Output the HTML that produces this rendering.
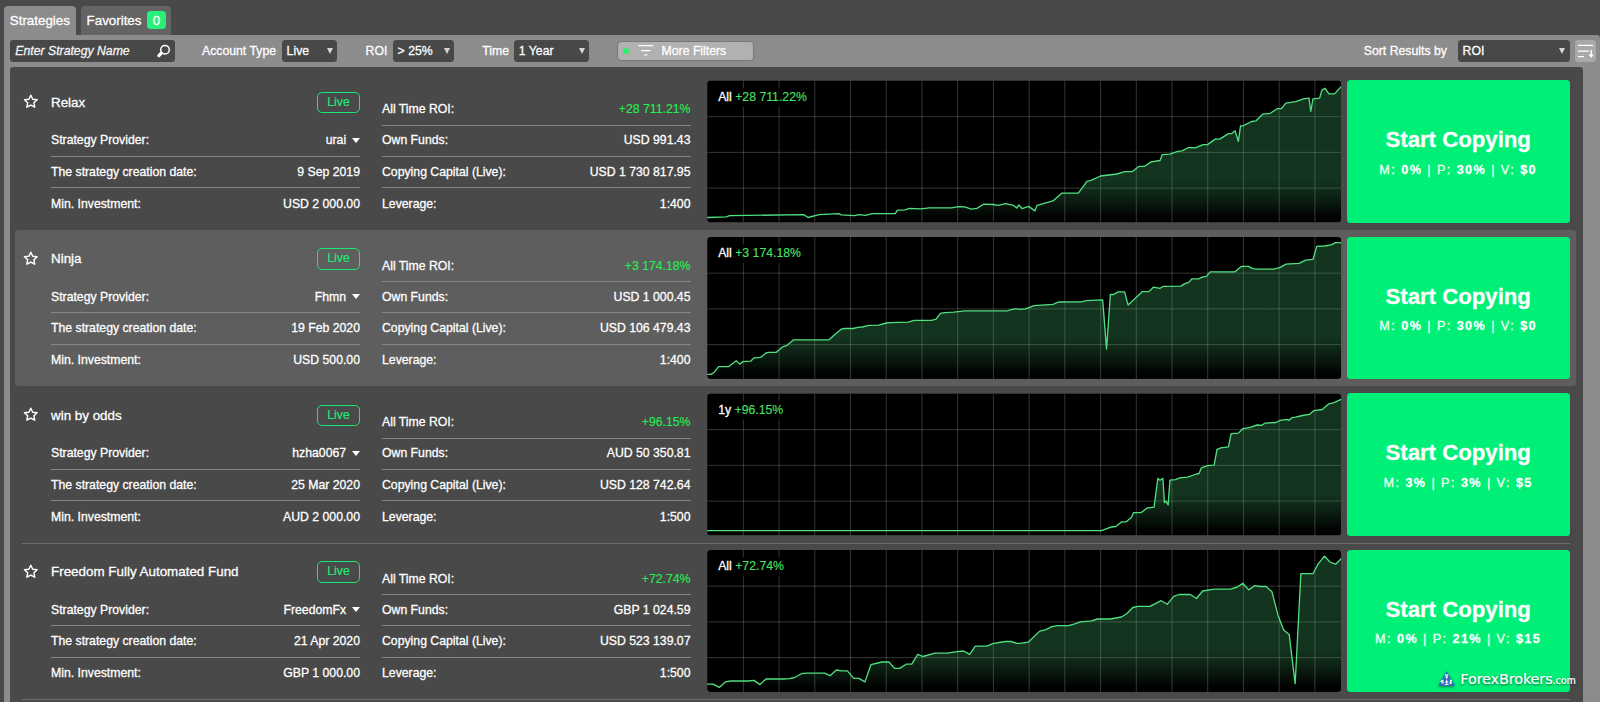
<!DOCTYPE html>
<html lang="en"><head><meta charset="utf-8"><title>Strategies</title>
<style>
*{box-sizing:border-box;margin:0;padding:0}
html,body{width:1600px;height:702px;overflow:hidden;background:#494949;font-family:"Liberation Sans",Arial,sans-serif;color:#fff;-webkit-text-stroke:0.28px currentColor}
body{position:relative}
.panel{position:absolute;left:4px;top:35px;width:1596px;height:667px;background:#8c8c8c;border-radius:0 3px 0 0}
.tab{position:absolute;top:5.5px;height:29.5px;border-radius:4px 4px 0 0;font-size:13.35px;line-height:30px;white-space:nowrap}
.tab.ta{left:4px;width:71.5px;background:#8c8c8c;padding-left:5.8px}
.tab.tb2{left:81px;width:90px;background:#646464;padding-left:5.6px}
.badge{position:absolute;left:66px;top:5.2px;width:19px;height:18.2px;border-radius:3.5px;background:#27f07a;color:#fff;font-size:13.35px;line-height:19.6px;text-align:center}
.tb{position:absolute;top:40px;height:21.6px;font-size:12.25px;line-height:23px;white-space:nowrap}
.lbl{position:absolute;top:40.5px;height:21px;font-size:12.25px;line-height:21px;white-space:nowrap;color:#fff}
.sel{background:#484848;border-radius:3.5px;padding-left:4.6px;color:#fff}
.sel i{position:absolute;right:4.3px;top:7.7px;width:0;height:0;border-left:3.2px solid transparent;border-right:3.2px solid transparent;border-top:6.3px solid #d6d6d6}
.search{left:10px;width:164.5px;background:#484848;border-radius:3px;padding-left:5.3px;font-style:italic;color:#f4f4f4}
.list{position:absolute;left:10px;top:67px;width:1573px;height:635px;background:#494949;border-radius:3px 3px 0 0;overflow:hidden}
.row{position:absolute;left:0;width:1573px;height:156.5px}
.row::after{content:"";position:absolute;left:12px;right:13px;bottom:-0.25px;height:1px;background:#6e6e6e}
.row.hl::after{display:none}
.rowbg{display:none}
.row.hl .rowbg{display:block;position:absolute;left:5px;top:-0.1px;width:1561px;height:156px;background:#5e5e5e;border-radius:3px}
.star{position:absolute;left:13.4px;top:20.5px}
.name{position:absolute;left:41px;top:19px;font-size:13.4px;line-height:20px;white-space:nowrap}
.live{position:absolute;left:307px;top:18px;width:43px;height:21.5px;border:1.4px solid #16e874;border-radius:5px;color:#1ceb78;-webkit-text-stroke:0.15px currentColor;font-size:12.25px;line-height:19.2px;text-align:center}
.col{position:absolute;top:0;font-size:12.25px}
.c1{left:41px;width:309px}
.c2{left:372px;width:308.5px}
.kv{position:absolute;left:0;right:0;height:31.2px;line-height:31.2px;white-space:nowrap}
.kv::before{content:"";position:absolute;left:0;right:0;top:0;height:1px;background:#868686}
.kv .v{position:absolute;right:0;top:0}
.kv .v.g{color:#24ee50;-webkit-text-stroke:0.12px currentColor}
.kv.r1{top:20.7px}
.kv.r1::before,.c1 .kv.r2::before{display:none}
.kv.r2{top:51.7px}
.kv.r2::before{top:-0.65px}
.kv.r3{top:83px}
.kv.r3::before{top:-0.95px}
.kv.r4{top:114.85px}
.kv.r4::before{top:-1.6px}
.prov{padding-right:13.9px}
.tri{position:absolute;right:-0.2px;top:12.5px;width:0;height:0;border-left:4.9px solid transparent;border-right:4.9px solid transparent;border-top:5.6px solid #fff}
.chart{position:absolute;left:697px;top:6.55px;width:636px;height:144px}
.chart-svg{position:absolute;left:0;top:0;display:block}
.clabel{position:absolute;left:7.2px;top:7.6px;padding:1px 4px 2px 4px;background:rgba(0,0,0,.82);font-size:12.25px;line-height:16px;color:#fff;white-space:nowrap}
.clabel span{color:#48e368;-webkit-text-stroke:0.12px currentColor}
.copy{position:absolute;left:1336.7px;top:6.5px;width:223px;height:142.6px;background:#00f077;border-radius:3.5px;text-align:center;color:#fff}
.t1{position:absolute;left:0;right:0;top:46px;font-size:22.2px;font-weight:bold;line-height:28px;white-space:nowrap}
.t2{position:absolute;left:0;right:0;top:80.5px;font-size:12.6px;line-height:18px;letter-spacing:1.45px;white-space:nowrap;color:#f2fff8}
.t2 b{color:#fff}

</style></head>
<body>
<div class="panel"></div>
<div class="tab ta">Strategies</div>
<div class="tab tb2">Favorites<div class="badge">0</div></div>
<div class="tb search">Enter Strategy Name<svg style="position:absolute;left:145px;top:0" width="16" height="21" viewBox="0 0 16 21"><circle cx="10" cy="9.75" r="4.3" fill="none" stroke="#fff" stroke-width="1.5"/><path d="M6.3 13.2 L3.9 15.6" stroke="#fff" stroke-width="3.3" stroke-linecap="round"/></svg></div>
<div class="lbl" style="left:202px">Account Type</div>
<div class="tb sel" style="left:282px;width:55.2px">Live<i></i></div>
<div class="lbl" style="left:365.6px">ROI</div>
<div class="tb sel" style="left:393px;width:61px">&gt; 25%<i></i></div>
<div class="lbl" style="left:482.3px">Time</div>
<div class="tb sel" style="left:514.2px;width:74.8px">1 Year<i></i></div>
<div class="tb more" style="left:617.4px;top:41.4px;width:137px;height:20px;background:#b1b1b1;border:1px solid #777;border-radius:4px;line-height:18px">
<span style="position:absolute;left:4.4px;top:5.4px;width:6.2px;height:6.2px;border-radius:50%;background:#2df06c"></span>
<svg style="position:absolute;left:18.4px;top:1px" width="18" height="15" viewBox="0 0 18 15"><path d="M1.3 2.6 H16.3 M4.3 7.6 H13.3 M7 12 H10.6" stroke="#fff" stroke-width="1.2" fill="none"/></svg>
<span style="position:absolute;left:43.2px;top:0">More Filters</span></div>
<div class="lbl" style="left:1363.8px">Sort Results by</div>
<div class="tb sel" style="left:1458px;width:111.6px">ROI<i></i></div>
<div class="tb" style="left:1575px;width:21px;background:#a9a9a9;border-radius:3px">
<svg style="position:absolute;left:0;top:0" width="21" height="21" viewBox="0 0 21 21"><path d="M2.9 5.3 H18.2 M2.9 11.05 H13.6 M2.9 16.7 H9" stroke="#fff" stroke-width="1.3" fill="none"/><path d="M16.2 10 V15.4" stroke="#fff" stroke-width="1.4" fill="none"/><path d="M13.5 14.6 H18.9 L16.2 18 Z" fill="#fff"/></svg></div>

<div class="list">
<div class="row" style="top:6.75px">
<div class="rowbg"></div>
<svg class="star" width="15.6" height="14.56" viewBox="0 0 15 14"><path d="M7.5 1.2 L9.35 5.05 L13.6 5.6 L10.5 8.5 L11.3 12.7 L7.5 10.65 L3.7 12.7 L4.5 8.5 L1.4 5.6 L5.65 5.05 Z" fill="none" stroke="#fff" stroke-width="1.4" stroke-linejoin="round"/></svg>
<div class="name">Relax</div>
<div class="live">Live</div>
<div class="col c1">
<div class="kv r2"><span class="k">Strategy Provider:</span><span class="v prov">urai<i class="tri"></i></span></div>
<div class="kv r3"><span class="k">The strategy creation date:</span><span class="v">9 Sep 2019</span></div>
<div class="kv r4"><span class="k">Min. Investment:</span><span class="v">USD 2 000.00</span></div>
</div>
<div class="col c2">
<div class="kv r1"><span class="k">All Time ROI:</span><span class="v g">+28 711.21%</span></div>
<div class="kv r2"><span class="k">Own Funds:</span><span class="v">USD 991.43</span></div>
<div class="kv r3"><span class="k">Copying Capital (Live):</span><span class="v">USD 1 730 817.95</span></div>
<div class="kv r4"><span class="k">Leverage:</span><span class="v">1:400</span></div>
</div>
<div class="chart" style="top:6.25px"><svg class="chart-svg" width="636" height="144" viewBox="0 0 636 144">
<defs><linearGradient id="fg0" x1="0" y1="0" x2="0" y2="142" gradientUnits="userSpaceOnUse"><stop offset="0" stop-color="#40ac66" stop-opacity="0.3"/><stop offset="0.705" stop-color="#40ac66" stop-opacity="0.3"/><stop offset="0.80" stop-color="#40ac66" stop-opacity="0.215"/><stop offset="0.90" stop-color="#40ac66" stop-opacity="0.1"/><stop offset="0.955" stop-color="#40ac66" stop-opacity="0.02"/><stop offset="1" stop-color="#40ac66" stop-opacity="0"/></linearGradient>
<clipPath id="cp0"><rect x="0" y="0" width="634" height="142" rx="3.6" ry="3.6"/></clipPath></defs>
<g transform="translate(0.15,0.40)"><g clip-path="url(#cp0)">
<rect x="0" y="0" width="634" height="142" fill="#000"/>
<g stroke="#ffffff" stroke-opacity="0.23" stroke-width="0.9"><line x1="36.22" y1="0" x2="36.22" y2="142"/><line x1="71.94" y1="0" x2="71.94" y2="142"/><line x1="107.66" y1="0" x2="107.66" y2="142"/><line x1="143.38" y1="0" x2="143.38" y2="142"/><line x1="179.10" y1="0" x2="179.10" y2="142"/><line x1="214.82" y1="0" x2="214.82" y2="142"/><line x1="250.54" y1="0" x2="250.54" y2="142"/><line x1="286.26" y1="0" x2="286.26" y2="142"/><line x1="321.98" y1="0" x2="321.98" y2="142"/><line x1="357.70" y1="0" x2="357.70" y2="142"/><line x1="393.42" y1="0" x2="393.42" y2="142"/><line x1="429.14" y1="0" x2="429.14" y2="142"/><line x1="464.86" y1="0" x2="464.86" y2="142"/><line x1="500.58" y1="0" x2="500.58" y2="142"/><line x1="536.30" y1="0" x2="536.30" y2="142"/><line x1="572.02" y1="0" x2="572.02" y2="142"/><line x1="607.74" y1="0" x2="607.74" y2="142"/><line x1="0" y1="36.27" x2="634" y2="36.27"/><line x1="0" y1="71.99" x2="634" y2="71.99"/><line x1="0" y1="107.71" x2="634" y2="107.71"/></g>
<path d="M0.0,137.1 L19.2,136.4 L22.5,135.3 L96.5,134.2 L100.9,137.1 L111.9,134.2 L131.8,133.3 L134.0,134.4 L147.2,135.3 L151.7,134.2 L158.3,134.9 L164.9,133.3 L188.1,133.3 L190.3,129.8 L198.0,129.4 L202.4,128.0 L213.5,128.5 L222.3,127.4 L244.4,127.4 L251.0,126.3 L257.6,126.5 L264.2,128.7 L269.8,128.0 L276.4,123.8 L286.3,124.1 L290.7,124.9 L298.5,123.2 L306.2,124.9 L309.5,127.6 L311.7,124.5 L315.0,128.3 L314.9,128.3 L321.5,126.0 L327.7,130.5 L329.9,124.9 L345.8,120.5 L354.6,112.8 L371.2,112.8 L380.0,100.7 L383.3,100.2 L393.3,95.6 L409.8,93.6 L417.5,91.2 L425.3,91.2 L431.9,85.9 L437.4,85.9 L444.0,81.5 L452.9,80.1 L455.1,74.2 L462.8,73.7 L470.5,70.9 L474.9,70.4 L481.6,67.1 L488.2,67.5 L495.9,64.2 L500.3,64.2 L508.1,58.7 L512.5,58.7 L521.3,53.2 L524.6,53.2 L527.9,50.3 L531.2,60.9 L533.4,45.5 L535.7,45.5 L544.5,41.1 L548.9,40.4 L555.5,33.8 L563.2,32.9 L569.9,28.3 L574.3,28.3 L578.7,22.7 L588.6,21.2 L596.4,18.5 L601.9,17.7 L603.6,31.1 L605.8,18.5 L612.5,17.7 L614.7,9.7 L618.0,7.9 L621.7,13.5 L627.3,13.5 L634.0,6.2 L634,142 L0,142 Z" fill="url(#fg0)"/>
<path d="M0.0,137.1 L19.2,136.4 L22.5,135.3 L96.5,134.2 L100.9,137.1 L111.9,134.2 L131.8,133.3 L134.0,134.4 L147.2,135.3 L151.7,134.2 L158.3,134.9 L164.9,133.3 L188.1,133.3 L190.3,129.8 L198.0,129.4 L202.4,128.0 L213.5,128.5 L222.3,127.4 L244.4,127.4 L251.0,126.3 L257.6,126.5 L264.2,128.7 L269.8,128.0 L276.4,123.8 L286.3,124.1 L290.7,124.9 L298.5,123.2 L306.2,124.9 L309.5,127.6 L311.7,124.5 L315.0,128.3 L314.9,128.3 L321.5,126.0 L327.7,130.5 L329.9,124.9 L345.8,120.5 L354.6,112.8 L371.2,112.8 L380.0,100.7 L383.3,100.2 L393.3,95.6 L409.8,93.6 L417.5,91.2 L425.3,91.2 L431.9,85.9 L437.4,85.9 L444.0,81.5 L452.9,80.1 L455.1,74.2 L462.8,73.7 L470.5,70.9 L474.9,70.4 L481.6,67.1 L488.2,67.5 L495.9,64.2 L500.3,64.2 L508.1,58.7 L512.5,58.7 L521.3,53.2 L524.6,53.2 L527.9,50.3 L531.2,60.9 L533.4,45.5 L535.7,45.5 L544.5,41.1 L548.9,40.4 L555.5,33.8 L563.2,32.9 L569.9,28.3 L574.3,28.3 L578.7,22.7 L588.6,21.2 L596.4,18.5 L601.9,17.7 L603.6,31.1 L605.8,18.5 L612.5,17.7 L614.7,9.7 L618.0,7.9 L621.7,13.5 L627.3,13.5 L634.0,6.2" fill="none" stroke="#50e080" stroke-width="1.32" stroke-linejoin="round" stroke-linecap="round"/>
</g></g>
</svg><div class="clabel" style="top:7.70px">All <span>+28 711.22%</span></div></div>
<div class="copy"><div class="t1">Start Copying</div><div class="t2">M: <b>0%</b> | P: <b>30%</b> | V: <b>$0</b></div></div>
</div><div class="row hl" style="top:163.25px">
<div class="rowbg"></div>
<svg class="star" width="15.6" height="14.56" viewBox="0 0 15 14"><path d="M7.5 1.2 L9.35 5.05 L13.6 5.6 L10.5 8.5 L11.3 12.7 L7.5 10.65 L3.7 12.7 L4.5 8.5 L1.4 5.6 L5.65 5.05 Z" fill="none" stroke="#fff" stroke-width="1.4" stroke-linejoin="round"/></svg>
<div class="name">Ninja</div>
<div class="live">Live</div>
<div class="col c1">
<div class="kv r2"><span class="k">Strategy Provider:</span><span class="v prov">Fhmn<i class="tri"></i></span></div>
<div class="kv r3"><span class="k">The strategy creation date:</span><span class="v">19 Feb 2020</span></div>
<div class="kv r4"><span class="k">Min. Investment:</span><span class="v">USD 500.00</span></div>
</div>
<div class="col c2">
<div class="kv r1"><span class="k">All Time ROI:</span><span class="v g">+3 174.18%</span></div>
<div class="kv r2"><span class="k">Own Funds:</span><span class="v">USD 1 000.45</span></div>
<div class="kv r3"><span class="k">Copying Capital (Live):</span><span class="v">USD 106 479.43</span></div>
<div class="kv r4"><span class="k">Leverage:</span><span class="v">1:400</span></div>
</div>
<div class="chart" style="top:5.75px"><svg class="chart-svg" width="636" height="144" viewBox="0 0 636 144">
<defs><linearGradient id="fg1" x1="0" y1="0" x2="0" y2="142" gradientUnits="userSpaceOnUse"><stop offset="0" stop-color="#40ac66" stop-opacity="0.3"/><stop offset="0.705" stop-color="#40ac66" stop-opacity="0.3"/><stop offset="0.80" stop-color="#40ac66" stop-opacity="0.215"/><stop offset="0.90" stop-color="#40ac66" stop-opacity="0.1"/><stop offset="0.955" stop-color="#40ac66" stop-opacity="0.02"/><stop offset="1" stop-color="#40ac66" stop-opacity="0"/></linearGradient>
<clipPath id="cp1"><rect x="0" y="0" width="634" height="142" rx="3.6" ry="3.6"/></clipPath></defs>
<g transform="translate(0.15,0.90)"><g clip-path="url(#cp1)">
<rect x="0" y="0" width="634" height="142" fill="#000"/>
<g stroke="#ffffff" stroke-opacity="0.23" stroke-width="0.9"><line x1="36.22" y1="0" x2="36.22" y2="142"/><line x1="71.94" y1="0" x2="71.94" y2="142"/><line x1="107.66" y1="0" x2="107.66" y2="142"/><line x1="143.38" y1="0" x2="143.38" y2="142"/><line x1="179.10" y1="0" x2="179.10" y2="142"/><line x1="214.82" y1="0" x2="214.82" y2="142"/><line x1="250.54" y1="0" x2="250.54" y2="142"/><line x1="286.26" y1="0" x2="286.26" y2="142"/><line x1="321.98" y1="0" x2="321.98" y2="142"/><line x1="357.70" y1="0" x2="357.70" y2="142"/><line x1="393.42" y1="0" x2="393.42" y2="142"/><line x1="429.14" y1="0" x2="429.14" y2="142"/><line x1="464.86" y1="0" x2="464.86" y2="142"/><line x1="500.58" y1="0" x2="500.58" y2="142"/><line x1="536.30" y1="0" x2="536.30" y2="142"/><line x1="572.02" y1="0" x2="572.02" y2="142"/><line x1="607.74" y1="0" x2="607.74" y2="142"/><line x1="0" y1="36.27" x2="634" y2="36.27"/><line x1="0" y1="71.99" x2="634" y2="71.99"/><line x1="0" y1="107.71" x2="634" y2="107.71"/></g>
<path d="M0.0,137.5 L3.8,137.5 L7.1,135.3 L11.5,129.8 L21.4,129.8 L29.1,123.8 L32.5,127.2 L35.8,124.7 L43.5,124.3 L46.8,121.0 L53.4,120.5 L58.9,116.1 L61.1,115.5 L68.9,115.5 L75.5,109.9 L79.9,108.4 L86.5,102.9 L121.9,102.9 L127.4,97.8 L134.0,92.3 L137.3,91.6 L146.1,91.6 L150.6,90.5 L155.0,90.1 L161.6,88.5 L171.5,88.3 L179.2,86.1 L183.7,85.7 L201.3,85.2 L206.8,83.4 L224.5,83.4 L228.9,82.3 L233.3,76.4 L237.7,75.7 L246.6,75.3 L257.6,74.0 L299.6,74.0 L307.3,72.0 L310.6,72.0 L312.7,72.4 L318.2,72.0 L327.0,68.7 L345.8,67.5 L351.3,65.1 L374.5,64.9 L378.9,63.8 L395.5,62.9 L399.4,112.1 L403.2,57.6 L406.5,57.6 L410.9,55.0 L417.5,55.0 L420.9,68.0 L425.3,64.0 L435.2,54.7 L441.8,54.7 L446.2,50.3 L452.9,51.4 L456.2,49.4 L473.8,49.2 L477.2,47.0 L481.6,45.5 L484.9,41.9 L491.5,41.9 L495.9,40.0 L499.2,39.5 L503.0,34.9 L527.9,34.9 L534.5,29.4 L541.2,29.4 L545.6,31.8 L550.0,32.2 L566.6,32.2 L573.2,30.5 L578.7,27.2 L591.9,26.5 L598.6,23.2 L605.8,22.5 L609.6,9.5 L617.3,9.1 L624.0,7.9 L628.4,5.7 L634.0,5.7 L634,142 L0,142 Z" fill="url(#fg1)"/>
<path d="M0.0,137.5 L3.8,137.5 L7.1,135.3 L11.5,129.8 L21.4,129.8 L29.1,123.8 L32.5,127.2 L35.8,124.7 L43.5,124.3 L46.8,121.0 L53.4,120.5 L58.9,116.1 L61.1,115.5 L68.9,115.5 L75.5,109.9 L79.9,108.4 L86.5,102.9 L121.9,102.9 L127.4,97.8 L134.0,92.3 L137.3,91.6 L146.1,91.6 L150.6,90.5 L155.0,90.1 L161.6,88.5 L171.5,88.3 L179.2,86.1 L183.7,85.7 L201.3,85.2 L206.8,83.4 L224.5,83.4 L228.9,82.3 L233.3,76.4 L237.7,75.7 L246.6,75.3 L257.6,74.0 L299.6,74.0 L307.3,72.0 L310.6,72.0 L312.7,72.4 L318.2,72.0 L327.0,68.7 L345.8,67.5 L351.3,65.1 L374.5,64.9 L378.9,63.8 L395.5,62.9 L399.4,112.1 L403.2,57.6 L406.5,57.6 L410.9,55.0 L417.5,55.0 L420.9,68.0 L425.3,64.0 L435.2,54.7 L441.8,54.7 L446.2,50.3 L452.9,51.4 L456.2,49.4 L473.8,49.2 L477.2,47.0 L481.6,45.5 L484.9,41.9 L491.5,41.9 L495.9,40.0 L499.2,39.5 L503.0,34.9 L527.9,34.9 L534.5,29.4 L541.2,29.4 L545.6,31.8 L550.0,32.2 L566.6,32.2 L573.2,30.5 L578.7,27.2 L591.9,26.5 L598.6,23.2 L605.8,22.5 L609.6,9.5 L617.3,9.1 L624.0,7.9 L628.4,5.7 L634.0,5.7" fill="none" stroke="#50e080" stroke-width="1.32" stroke-linejoin="round" stroke-linecap="round"/>
</g></g>
</svg><div class="clabel" style="top:8.20px">All <span>+3 174.18%</span></div></div>
<div class="copy"><div class="t1">Start Copying</div><div class="t2">M: <b>0%</b> | P: <b>30%</b> | V: <b>$0</b></div></div>
</div><div class="row" style="top:319.75px">
<div class="rowbg"></div>
<svg class="star" width="15.6" height="14.56" viewBox="0 0 15 14"><path d="M7.5 1.2 L9.35 5.05 L13.6 5.6 L10.5 8.5 L11.3 12.7 L7.5 10.65 L3.7 12.7 L4.5 8.5 L1.4 5.6 L5.65 5.05 Z" fill="none" stroke="#fff" stroke-width="1.4" stroke-linejoin="round"/></svg>
<div class="name">win by odds</div>
<div class="live">Live</div>
<div class="col c1">
<div class="kv r2"><span class="k">Strategy Provider:</span><span class="v prov">hzha0067<i class="tri"></i></span></div>
<div class="kv r3"><span class="k">The strategy creation date:</span><span class="v">25 Mar 2020</span></div>
<div class="kv r4"><span class="k">Min. Investment:</span><span class="v">AUD 2 000.00</span></div>
</div>
<div class="col c2">
<div class="kv r1"><span class="k">All Time ROI:</span><span class="v g">+96.15%</span></div>
<div class="kv r2"><span class="k">Own Funds:</span><span class="v">AUD 50 350.81</span></div>
<div class="kv r3"><span class="k">Copying Capital (Live):</span><span class="v">USD 128 742.64</span></div>
<div class="kv r4"><span class="k">Leverage:</span><span class="v">1:500</span></div>
</div>
<div class="chart" style="top:6.25px"><svg class="chart-svg" width="636" height="144" viewBox="0 0 636 144">
<defs><linearGradient id="fg2" x1="0" y1="0" x2="0" y2="142" gradientUnits="userSpaceOnUse"><stop offset="0" stop-color="#40ac66" stop-opacity="0.3"/><stop offset="0.705" stop-color="#40ac66" stop-opacity="0.3"/><stop offset="0.80" stop-color="#40ac66" stop-opacity="0.215"/><stop offset="0.90" stop-color="#40ac66" stop-opacity="0.1"/><stop offset="0.955" stop-color="#40ac66" stop-opacity="0.02"/><stop offset="1" stop-color="#40ac66" stop-opacity="0"/></linearGradient>
<clipPath id="cp2"><rect x="0" y="0" width="634" height="142" rx="3.6" ry="3.6"/></clipPath></defs>
<g transform="translate(0.15,0.40)"><g clip-path="url(#cp2)">
<rect x="0" y="0" width="634" height="142" fill="#000"/>
<g stroke="#ffffff" stroke-opacity="0.23" stroke-width="0.9"><line x1="36.22" y1="0" x2="36.22" y2="142"/><line x1="71.94" y1="0" x2="71.94" y2="142"/><line x1="107.66" y1="0" x2="107.66" y2="142"/><line x1="143.38" y1="0" x2="143.38" y2="142"/><line x1="179.10" y1="0" x2="179.10" y2="142"/><line x1="214.82" y1="0" x2="214.82" y2="142"/><line x1="250.54" y1="0" x2="250.54" y2="142"/><line x1="286.26" y1="0" x2="286.26" y2="142"/><line x1="321.98" y1="0" x2="321.98" y2="142"/><line x1="357.70" y1="0" x2="357.70" y2="142"/><line x1="393.42" y1="0" x2="393.42" y2="142"/><line x1="429.14" y1="0" x2="429.14" y2="142"/><line x1="464.86" y1="0" x2="464.86" y2="142"/><line x1="500.58" y1="0" x2="500.58" y2="142"/><line x1="536.30" y1="0" x2="536.30" y2="142"/><line x1="572.02" y1="0" x2="572.02" y2="142"/><line x1="607.74" y1="0" x2="607.74" y2="142"/><line x1="0" y1="36.27" x2="634" y2="36.27"/><line x1="0" y1="71.99" x2="634" y2="71.99"/><line x1="0" y1="107.71" x2="634" y2="107.71"/></g>
<path d="M0.0,137.3 L394.4,137.3 L401.0,134.7 L404.3,133.6 L408.7,133.1 L414.2,128.5 L418.7,128.5 L424.2,124.1 L426.4,119.2 L434.1,119.2 L439.6,114.8 L446.9,113.7 L450.7,85.0 L452.9,86.8 L455.7,85.0 L457.3,109.3 L458.8,107.5 L461.0,111.5 L462.8,86.8 L468.3,86.3 L472.7,84.5 L480.5,83.7 L489.3,80.6 L491.9,80.1 L494.2,74.4 L500.3,72.2 L507.0,71.7 L509.8,56.3 L513.6,54.5 L521.3,53.4 L524.0,40.2 L531.2,39.7 L535.7,35.3 L542.3,34.2 L550.0,31.6 L554.4,32.0 L557.7,29.8 L568.8,29.1 L573.2,26.9 L579.8,26.0 L582.0,26.9 L584.7,24.3 L588.6,23.8 L595.3,22.1 L602.3,21.0 L606.7,17.2 L615.1,16.1 L621.7,10.4 L626.2,9.5 L634.0,6.0 L634,142 L0,142 Z" fill="url(#fg2)"/>
<path d="M0.0,137.3 L394.4,137.3 L401.0,134.7 L404.3,133.6 L408.7,133.1 L414.2,128.5 L418.7,128.5 L424.2,124.1 L426.4,119.2 L434.1,119.2 L439.6,114.8 L446.9,113.7 L450.7,85.0 L452.9,86.8 L455.7,85.0 L457.3,109.3 L458.8,107.5 L461.0,111.5 L462.8,86.8 L468.3,86.3 L472.7,84.5 L480.5,83.7 L489.3,80.6 L491.9,80.1 L494.2,74.4 L500.3,72.2 L507.0,71.7 L509.8,56.3 L513.6,54.5 L521.3,53.4 L524.0,40.2 L531.2,39.7 L535.7,35.3 L542.3,34.2 L550.0,31.6 L554.4,32.0 L557.7,29.8 L568.8,29.1 L573.2,26.9 L579.8,26.0 L582.0,26.9 L584.7,24.3 L588.6,23.8 L595.3,22.1 L602.3,21.0 L606.7,17.2 L615.1,16.1 L621.7,10.4 L626.2,9.5 L634.0,6.0" fill="none" stroke="#50e080" stroke-width="1.32" stroke-linejoin="round" stroke-linecap="round"/>
</g></g>
</svg><div class="clabel" style="top:7.70px">1y <span>+96.15%</span></div></div>
<div class="copy"><div class="t1">Start Copying</div><div class="t2">M: <b>3%</b> | P: <b>3%</b> | V: <b>$5</b></div></div>
</div><div class="row" style="top:476.25px">
<div class="rowbg"></div>
<svg class="star" width="15.6" height="14.56" viewBox="0 0 15 14"><path d="M7.5 1.2 L9.35 5.05 L13.6 5.6 L10.5 8.5 L11.3 12.7 L7.5 10.65 L3.7 12.7 L4.5 8.5 L1.4 5.6 L5.65 5.05 Z" fill="none" stroke="#fff" stroke-width="1.4" stroke-linejoin="round"/></svg>
<div class="name">Freedom Fully Automated Fund</div>
<div class="live">Live</div>
<div class="col c1">
<div class="kv r2"><span class="k">Strategy Provider:</span><span class="v prov">FreedomFx<i class="tri"></i></span></div>
<div class="kv r3"><span class="k">The strategy creation date:</span><span class="v">21 Apr 2020</span></div>
<div class="kv r4"><span class="k">Min. Investment:</span><span class="v">GBP 1 000.00</span></div>
</div>
<div class="col c2">
<div class="kv r1"><span class="k">All Time ROI:</span><span class="v g">+72.74%</span></div>
<div class="kv r2"><span class="k">Own Funds:</span><span class="v">GBP 1 024.59</span></div>
<div class="kv r3"><span class="k">Copying Capital (Live):</span><span class="v">USD 523 139.07</span></div>
<div class="kv r4"><span class="k">Leverage:</span><span class="v">1:500</span></div>
</div>
<div class="chart" style="top:5.75px"><svg class="chart-svg" width="636" height="144" viewBox="0 0 636 144">
<defs><linearGradient id="fg3" x1="0" y1="0" x2="0" y2="142" gradientUnits="userSpaceOnUse"><stop offset="0" stop-color="#40ac66" stop-opacity="0.3"/><stop offset="0.705" stop-color="#40ac66" stop-opacity="0.3"/><stop offset="0.80" stop-color="#40ac66" stop-opacity="0.215"/><stop offset="0.90" stop-color="#40ac66" stop-opacity="0.1"/><stop offset="0.955" stop-color="#40ac66" stop-opacity="0.02"/><stop offset="1" stop-color="#40ac66" stop-opacity="0"/></linearGradient>
<clipPath id="cp3"><rect x="0" y="0" width="634" height="142" rx="3.6" ry="3.6"/></clipPath></defs>
<g transform="translate(0.15,0.90)"><g clip-path="url(#cp3)">
<rect x="0" y="0" width="634" height="142" fill="#000"/>
<g stroke="#ffffff" stroke-opacity="0.23" stroke-width="0.9"><line x1="36.22" y1="0" x2="36.22" y2="142"/><line x1="71.94" y1="0" x2="71.94" y2="142"/><line x1="107.66" y1="0" x2="107.66" y2="142"/><line x1="143.38" y1="0" x2="143.38" y2="142"/><line x1="179.10" y1="0" x2="179.10" y2="142"/><line x1="214.82" y1="0" x2="214.82" y2="142"/><line x1="250.54" y1="0" x2="250.54" y2="142"/><line x1="286.26" y1="0" x2="286.26" y2="142"/><line x1="321.98" y1="0" x2="321.98" y2="142"/><line x1="357.70" y1="0" x2="357.70" y2="142"/><line x1="393.42" y1="0" x2="393.42" y2="142"/><line x1="429.14" y1="0" x2="429.14" y2="142"/><line x1="464.86" y1="0" x2="464.86" y2="142"/><line x1="500.58" y1="0" x2="500.58" y2="142"/><line x1="536.30" y1="0" x2="536.30" y2="142"/><line x1="572.02" y1="0" x2="572.02" y2="142"/><line x1="607.74" y1="0" x2="607.74" y2="142"/><line x1="0" y1="36.27" x2="634" y2="36.27"/><line x1="0" y1="71.99" x2="634" y2="71.99"/><line x1="0" y1="107.71" x2="634" y2="107.71"/></g>
<path d="M0.0,134.2 L6.0,134.2 L12.1,137.5 L18.1,132.0 L23.6,131.1 L41.3,131.1 L46.8,130.5 L52.8,134.7 L58.9,129.1 L76.6,129.1 L82.1,128.7 L87.6,127.6 L94.3,123.8 L99.8,123.2 L117.4,123.2 L123.0,125.8 L129.1,120.1 L134.0,121.0 L140.2,121.0 L146.6,128.5 L151.7,128.5 L157.8,132.0 L163.8,114.8 L174.8,112.1 L181.5,111.9 L187.4,118.5 L192.5,118.5 L199.1,114.3 L204.6,114.3 L210.6,104.4 L215.7,106.6 L227.8,103.3 L240.0,103.3 L249.9,101.8 L256.5,101.1 L262.5,104.4 L268.2,96.2 L279.7,96.2 L286.3,93.4 L298.5,91.6 L304.0,91.6 L309.5,93.4 L312.7,93.4 L321.1,92.3 L332.6,81.2 L338.1,79.9 L344.7,76.8 L350.2,75.7 L361.3,75.7 L366.8,74.2 L373.4,72.0 L384.4,70.9 L390.0,69.1 L403.2,69.1 L414.2,67.1 L419.8,63.6 L425.7,57.6 L430.8,56.5 L442.9,56.5 L454.0,50.8 L460.2,54.3 L466.6,46.4 L471.6,44.6 L483.1,44.6 L489.3,48.6 L495.5,41.1 L507.0,39.3 L523.5,39.3 L530.1,37.1 L535.7,33.3 L541.6,40.0 L547.4,35.8 L553.3,36.6 L558.8,36.6 L564.8,41.9 L571.0,65.8 L576.5,80.1 L582.0,84.5 L588.0,133.8 L593.7,23.8 L605.8,23.8 L611.1,13.9 L617.3,6.2 L622.8,12.1 L628.4,14.3 L634.0,8.8 L634,142 L0,142 Z" fill="url(#fg3)"/>
<path d="M0.0,134.2 L6.0,134.2 L12.1,137.5 L18.1,132.0 L23.6,131.1 L41.3,131.1 L46.8,130.5 L52.8,134.7 L58.9,129.1 L76.6,129.1 L82.1,128.7 L87.6,127.6 L94.3,123.8 L99.8,123.2 L117.4,123.2 L123.0,125.8 L129.1,120.1 L134.0,121.0 L140.2,121.0 L146.6,128.5 L151.7,128.5 L157.8,132.0 L163.8,114.8 L174.8,112.1 L181.5,111.9 L187.4,118.5 L192.5,118.5 L199.1,114.3 L204.6,114.3 L210.6,104.4 L215.7,106.6 L227.8,103.3 L240.0,103.3 L249.9,101.8 L256.5,101.1 L262.5,104.4 L268.2,96.2 L279.7,96.2 L286.3,93.4 L298.5,91.6 L304.0,91.6 L309.5,93.4 L312.7,93.4 L321.1,92.3 L332.6,81.2 L338.1,79.9 L344.7,76.8 L350.2,75.7 L361.3,75.7 L366.8,74.2 L373.4,72.0 L384.4,70.9 L390.0,69.1 L403.2,69.1 L414.2,67.1 L419.8,63.6 L425.7,57.6 L430.8,56.5 L442.9,56.5 L454.0,50.8 L460.2,54.3 L466.6,46.4 L471.6,44.6 L483.1,44.6 L489.3,48.6 L495.5,41.1 L507.0,39.3 L523.5,39.3 L530.1,37.1 L535.7,33.3 L541.6,40.0 L547.4,35.8 L553.3,36.6 L558.8,36.6 L564.8,41.9 L571.0,65.8 L576.5,80.1 L582.0,84.5 L588.0,133.8 L593.7,23.8 L605.8,23.8 L611.1,13.9 L617.3,6.2 L622.8,12.1 L628.4,14.3 L634.0,8.8" fill="none" stroke="#50e080" stroke-width="1.32" stroke-linejoin="round" stroke-linecap="round"/>
</g></g>
</svg><div class="clabel" style="top:8.20px">All <span>+72.74%</span></div></div>
<div class="copy"><div class="t1">Start Copying</div><div class="t2">M: <b>0%</b> | P: <b>21%</b> | V: <b>$15</b></div></div>
</div>
</div>
<div class="wm" style="position:absolute;left:1438px;top:670px;width:140px;height:20px;white-space:nowrap;color:#fff;-webkit-text-stroke:0.2px #fff;text-shadow:0 1px 2.5px rgba(0,0,0,.6)">
<svg style="position:absolute;left:0;top:0.6px;filter:drop-shadow(0 1px 1.5px rgba(0,0,0,.45))" width="17.4" height="15.6" viewBox="0 0 17.4 15.6"><path d="M8.7 0.3 L17.1 15.2 H0.3 Z" fill="#2e6db9"/><g stroke="#eef5fc" stroke-width="1.05" fill="none" stroke-linecap="round"><path d="M7.5 3.4 L8.7 5.2 L9.9 3.4 M8.7 5.2 V7.2 M7.6 6 H9.8"/><path d="M8.7 9 V13.6 M7.2 13.6 H10.2 M7.6 10.9 H9.8"/><path d="M5.4 9.3 C4 8.9 3.3 10 3.6 11 C3.9 12 5 12.1 5.5 11.8 M3 10.4 H4.8"/><path d="M13.6 9.4 C12.6 9 11.9 9.7 12.6 10.4 C13.4 11 14 11.4 13.2 12.1 C12.6 12.5 11.9 12.2 11.7 11.9 M12.8 8.8 V12.8"/></g></svg>
<span style="position:absolute;left:22.3px;top:1px;transform:translateY(-0.55px);font-family:'DejaVu Sans','Liberation Sans',sans-serif;font-size:14.4px;line-height:18px;letter-spacing:-0.12px">ForexBrokers<span style="font-size:9.6px;letter-spacing:-0.1px">.com</span></span></div>

</body></html>
